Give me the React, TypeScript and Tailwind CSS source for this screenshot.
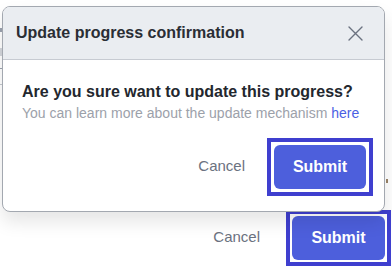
import React from "react";

function CloseIcon() {
  return (
    <svg width="15" height="15" viewBox="0 0 15 15" fill="none" aria-hidden="true">
      <path d="M1 1L14 14M14 1L1 14" stroke="#6b7280" strokeWidth="1.4" strokeLinecap="round" />
    </svg>
  );
}

function FocusedSubmit({ pad, width }: { pad: string; width: string }) {
  return (
    <div className={`border-4 border-[#3f3fcf] bg-white ${pad}`}>
      <button
        className={`${width} h-[44px] rounded-[6px] bg-[#4d5fdc] text-white text-[16px] leading-[20px] font-bold`}
      >
        Submit
      </button>
    </div>
  );
}

export default function App() {
  return (
    <div
      className="relative w-[392px] h-[268px] overflow-hidden bg-white"
      style={{ fontFamily: '"Liberation Sans", Arial, sans-serif' }}
    >
      {/* background page */}
      <div className="flex flex-col h-[268px]">
        <div className="flex-1 flex">
          <div className="w-[3px] flex flex-col">
            <div className="mt-[28px] h-[4px] w-[2px] bg-[#9ca3af]" />
            <div className="mt-[16px] h-[8px] w-[3px] bg-[#d4d7dc]" />
            <div className="mt-[12px] h-[1px] w-[3px] bg-[#9ca3af]" />
            <div className="mt-[15px] h-[1px] w-[3px] bg-[#c4c8ce]" />
          </div>
          <div className="flex-1" />
          <div className="w-[6px] flex flex-col">
            <div className="mt-[179px] ml-[0px] h-[4px] w-[2px] bg-[#9a8468]" />
          </div>
        </div>
        <div className="flex justify-end items-center gap-[26px] pr-[1px] pb-[2px]">
          <span className="text-[15px] leading-[20px] text-[#6b7280] -mt-[2px]">Cancel</span>
          <FocusedSubmit pad="p-[2px]" width="w-[93px]" />
        </div>
      </div>

      {/* dialog overlay */}
      <div className="absolute left-[2px] top-[6px] w-[383px] h-[206px] rounded-[8px] border border-[#a3a8b0] bg-white overflow-hidden shadow-[0_10px_18px_rgba(0,0,0,0.10)] flex flex-col">
        <div className="h-[53px] shrink-0 flex items-center justify-between bg-[#eaedf1] border-b border-[#c7cbd2] pl-[13px] pr-[21px]">
          <span className="text-[16px] leading-[20px] font-bold text-[#2a2e35]">
            Update progress confirmation
          </span>
          <CloseIcon />
        </div>
        <div className="flex flex-col pl-[19px] pt-[22px]">
          <p className="text-[16px] leading-[20px] font-bold text-[#23272e]">
            Are you sure want to update this progress?
          </p>
          <p className="mt-[1px] text-[14px] leading-[20px] text-[#9ca1aa]">
            You can learn more about the update mechanism <span className="text-[#4a5fe3]">here</span>
          </p>
        </div>
        <div className="mt-[15px] flex justify-end items-center gap-[22px] pr-[11px]">
          <span className="text-[15px] leading-[20px] text-[#6b7280] -mt-[2px]">Cancel</span>
          <FocusedSubmit pad="p-[3px]" width="w-[92px]" />
        </div>
      </div>
    </div>
  );
}
